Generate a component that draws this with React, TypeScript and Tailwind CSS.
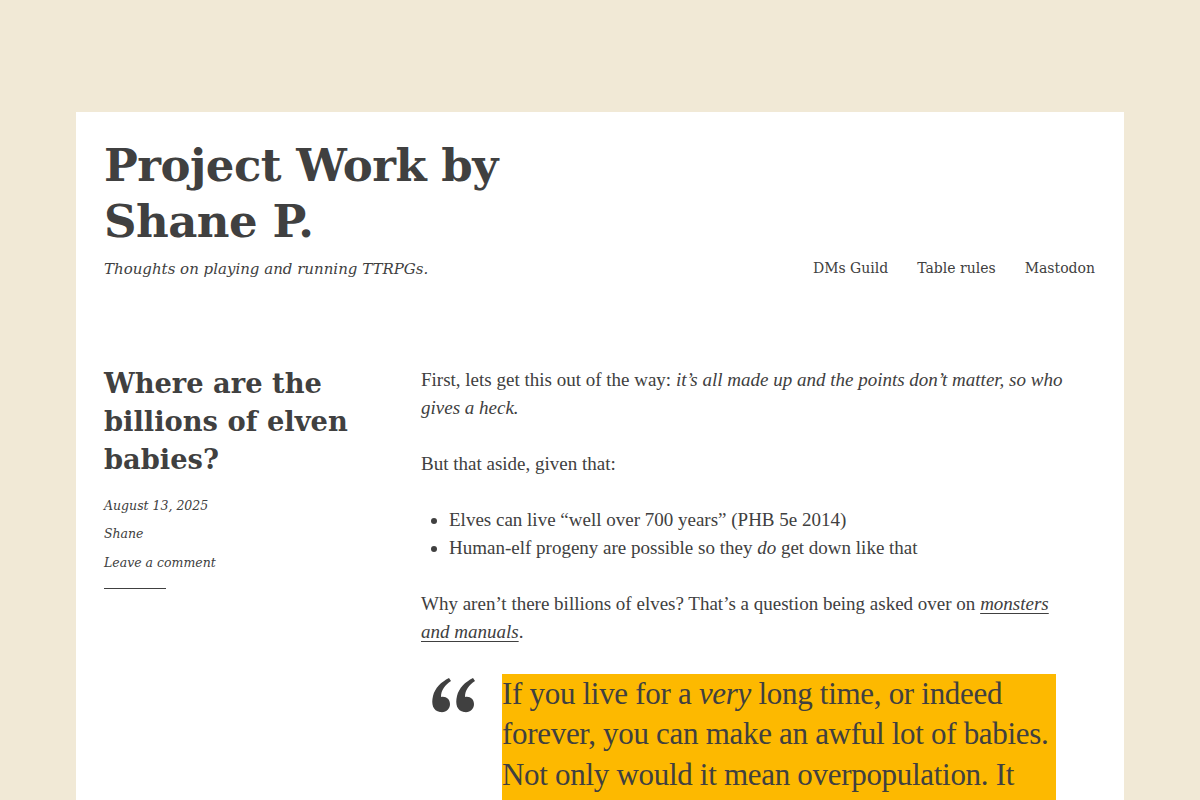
const serif = "font-['DejaVu_Serif','Liberation_Serif',serif]"
const body = "font-['Liberation_Serif','Times_New_Roman',serif]"

const navLinks = ["DMs Guild", "Table rules", "Mastodon"]

function QuoteMark() {
  return (
    <svg width="46" height="36" viewBox="0 0 46 36" className="mt-[3px] shrink-0 text-[#404040]">
      <path
        fill="currentColor"
        d="M19 1 C11 5 5 11 3 19 C1 27 3 34 10 35 C16 36 20 32 20 27 C20 22 16 19 11 20 C11 13 15 8 21 4 Z"
      />
      <path
        fill="currentColor"
        d="M43 1 C35 5 29 11 27 19 C25 27 27 34 34 35 C40 36 44 32 44 27 C44 22 40 19 35 20 C35 13 39 8 45 4 Z"
      />
    </svg>
  )
}

export default function App() {
  return (
    <div className="min-h-screen bg-[#f1e9d6] pt-[112px] px-[76px] text-[#404040]">
      <div className="bg-white min-h-[800px] pl-[28px] pr-[29px] pt-[26px]">
        {/* Site header */}
        <header className="flex items-end justify-between">
          <div>
            <h1 className={`${serif} font-bold text-[45px] leading-[56px] max-w-[430px] tracking-[-0.5px]`}>
              Project Work by Shane P.
            </h1>
            <p className={`${serif} italic text-[15px] mt-[8px]`}>Thoughts on playing and running TTRPGs.</p>
          </div>
          <nav className={`${serif} text-[14px] flex gap-[29px] mb-[2px]`}>
            {navLinks.map((l) => (
              <a key={l} href="#">
                {l}
              </a>
            ))}
          </nav>
        </header>

        <main className="grid grid-cols-[317px_1fr] mt-[84px]">
          {/* Post meta */}
          <aside>
            <h2 className={`${serif} font-bold text-[27.3px] leading-[38px] max-w-[260px] -mt-[1px]`}>
              Where are the billions of elven babies?
            </h2>
            <div className={`${serif} italic text-[12.5px] leading-[28.5px] mt-[14px]`}>
              <div>August 13, 2025</div>
              <div>Shane</div>
              <div>Leave a comment</div>
            </div>
            <div className="w-[62px] h-px bg-[#404040] mt-[11px]" />
          </aside>

          {/* Post content */}
          <article className={`${body} text-[19px] leading-[28px] pt-[1px] pr-[15px]`}>
            <p>
              First, lets get this out of the way:{" "}
              <em>it’s all made up and the points don’t matter, so who gives a heck.</em>
            </p>
            <p className="mt-[28px]">But that aside, given that:</p>
            <ul className="mt-[28px] list-disc pl-[28px]">
              <li>Elves can live “well over 700 years” (PHB 5e 2014)</li>
              <li>
                Human-elf progeny are possible so they <em>do</em> get down like that
              </li>
            </ul>
            <p className="mt-[28px]">
              Why aren’t there billions of elves? That’s a question being asked over on{" "}
              <a href="#" className="italic underline underline-offset-[3px]">
                monsters and manuals
              </a>
              .
            </p>
            <blockquote className="flex gap-[26px] mt-[28px] pl-[9px] pr-[24px]">
              <QuoteMark />
              <div className="bg-[#fdb900] text-[31px] tracking-[-0.3px] leading-[40.5px] pb-[20px]">
                If you live for a <em>very</em> long time, or indeed forever, you can make an awful lot of babies. Not
                only would it mean overpopulation. It would also mean the bloodlines would get very muddled.
              </div>
            </blockquote>
          </article>
        </main>
      </div>
    </div>
  )
}
